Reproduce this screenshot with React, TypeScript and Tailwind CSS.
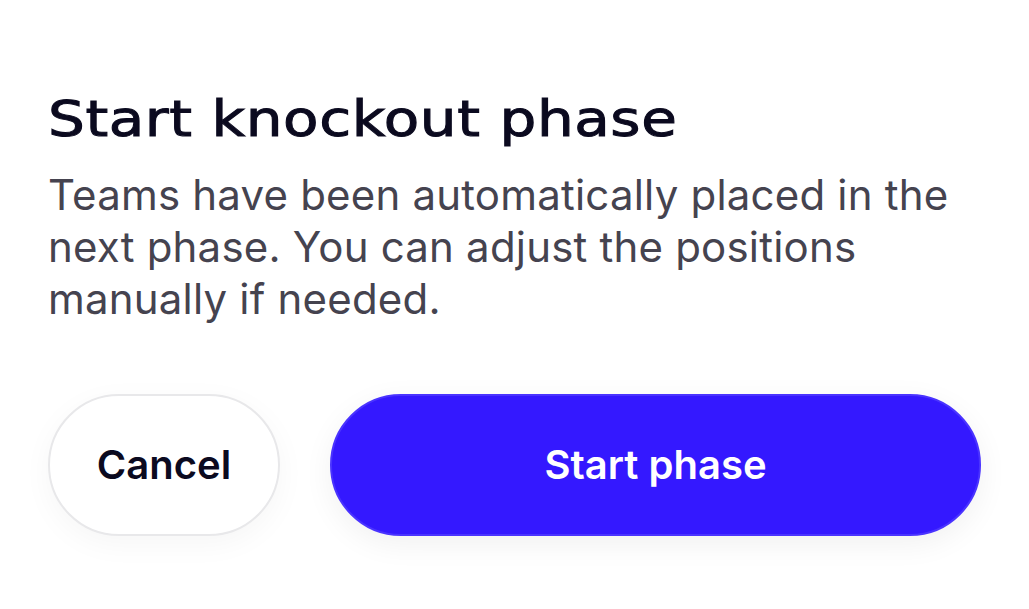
export default function App() {
  return (
    <div className="min-h-screen w-full bg-white" style={{ fontFamily: "Inter, 'Liberation Sans', sans-serif" }}>
      <div className="w-[981px] pl-[48px] pt-[94px]">
        <h1
          className="w-fit origin-left scale-x-[1.16] text-[50px] leading-[50px] font-normal tracking-[0.5px] text-[#0b0a1f] [-webkit-text-stroke:1px_#0b0a1f]"
          style={{ fontFamily: "'DejaVu Sans', sans-serif" }}
        >
          Start knockout phase
        </h1>
        <p className="mt-[25px] text-[42px] leading-[52px] tracking-[0.2px] text-[#45434f]">
          Teams have been automatically placed in the next phase. You can adjust the positions manually if needed.
        </p>
        <div className="mt-[69px] flex gap-[50px]">
          <button className="h-[142px] w-[232px] shrink-0 rounded-full border-2 border-[#e8e8ea] bg-white text-[40px] font-semibold text-[#0b0a1f] shadow-[0_8px_30px_rgba(0,0,0,0.04)]">
            Cancel
          </button>
          <button className="h-[142px] flex-1 rounded-full border-2 border-[#4a33ff] bg-[#3418ff] text-[40px] font-semibold text-white shadow-[0_8px_30px_rgba(0,0,0,0.06)]">
            Start phase
          </button>
        </div>
      </div>
    </div>
  );
}
